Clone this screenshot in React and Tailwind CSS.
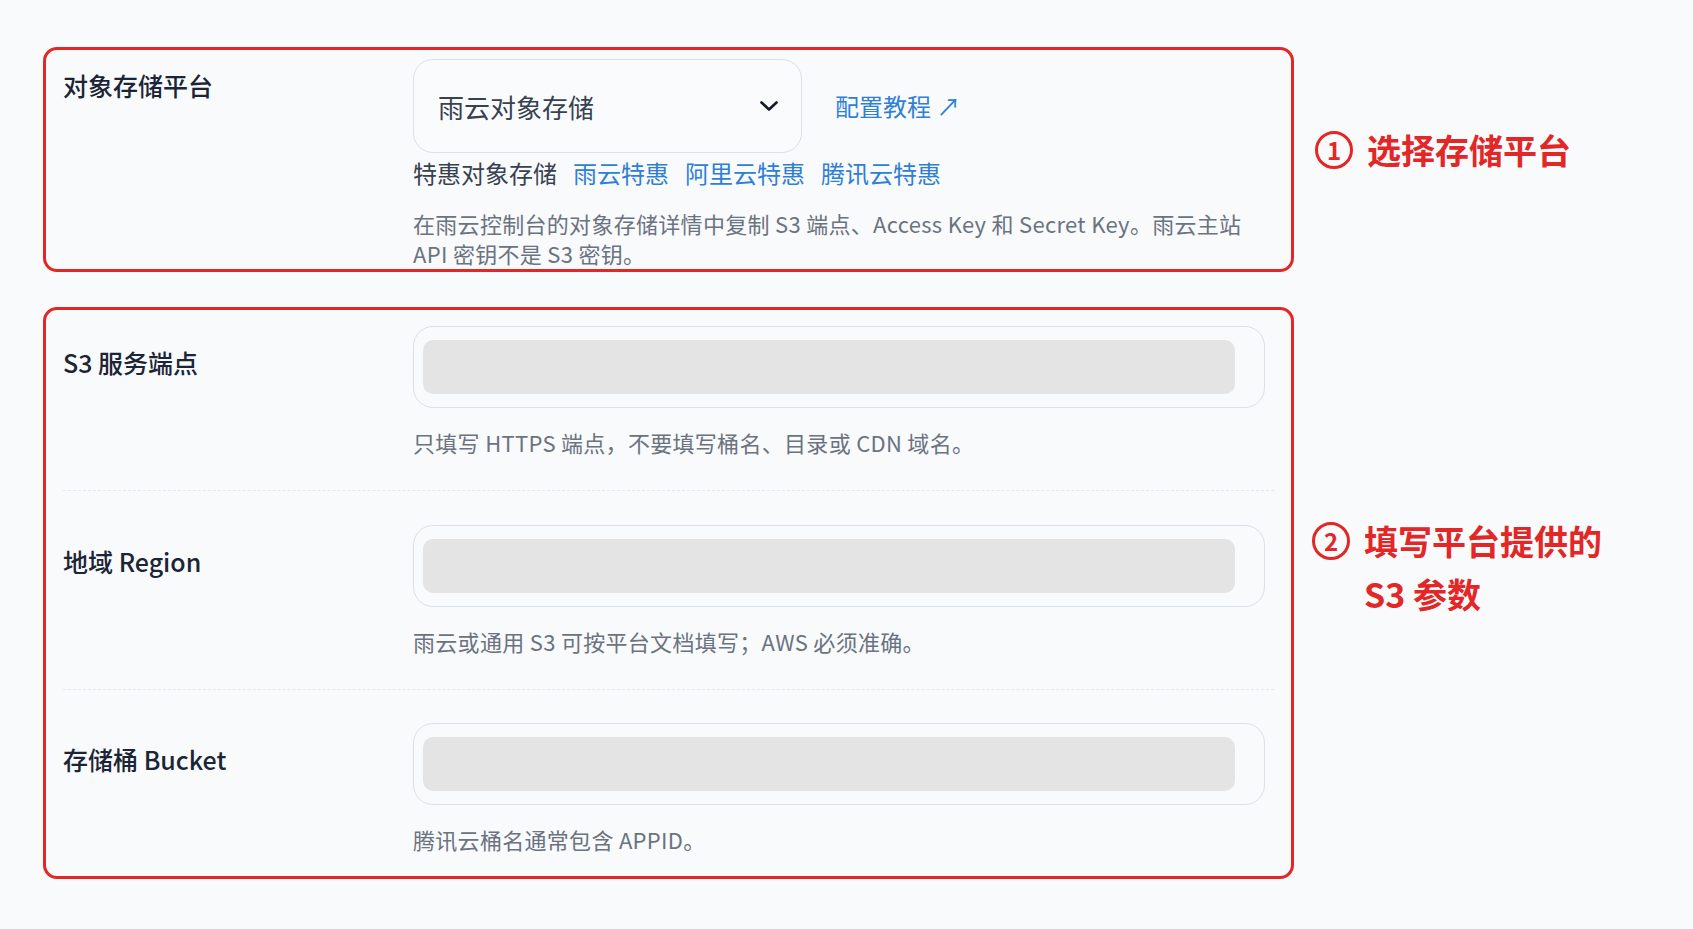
import React from "react";

const FONT = { fontFamily: '"Noto Sans CJK SC", "Noto Sans", sans-serif' };

const fields = [
  { label: "S3 服务端点", help: "只填写 HTTPS 端点，不要填写桶名、目录或 CDN 域名。" },
  { label: "地域 Region", help: "雨云或通用 S3 可按平台文档填写；AWS 必须准确。" },
  { label: "存储桶 Bucket", help: "腾讯云桶名通常包含 APPID。" },
];

const Circled = ({ n }) => (
  <span className="flex items-center justify-center w-[38px] h-[38px] rounded-full border-[3px] border-[#e32626] text-[24px] font-bold leading-none text-[#e32626]">
    {n}
  </span>
);

const FieldRow = ({ label, help, index, last }) => {
  const pad =
    index === 0 ? "pt-[16px] pb-[33px]" : last ? "pt-[33px] pb-[22px]" : "pt-[34px] pb-[33px]";
  return (
    <div
      className={`grid grid-cols-[350px_1fr] ${pad} ${
        last ? "" : "border-b border-dashed border-[#e3e8ee]"
      }`}
    >
      <div className="pt-[20px] text-[25px] leading-[32px] font-medium text-[#1b2536]">
        {label}
      </div>
      <div className="pr-[9px]">
        <div className="h-[82px] rounded-[20px] border border-[#d8e1ea] bg-[#f8fafc] pl-[9px] pr-[29px] py-[13px]">
          <div className="h-full rounded-[10px] bg-[#e4e4e4]" />
        </div>
        <p className="mt-[19px] text-[22px] leading-[30px] tracking-[0.3px] text-[#6b7280]">{help}</p>
      </div>
    </div>
  );
};

export default function App() {
  return (
    <div className="min-h-screen bg-[#f8fafb] pt-[47px] pl-[43px]" style={FONT}>
      {/* Platform selection */}
      <div className="flex items-start">
        <div className="w-[1251px] h-[225px] rounded-[14px] border-[3px] border-[#e32626] pl-[17px] pt-[9px]">
          <div className="grid grid-cols-[350px_1fr]">
            <div className="mt-[10px] text-[25px] leading-[32px] font-medium text-[#1b2536]">
              对象存储平台
            </div>
            <div>
              <div className="flex items-center">
                <div className="flex items-center justify-between w-[389px] h-[94px] rounded-[20px] border border-[#d8e1ea] bg-[#f9fbfc] pl-[24px] pr-[22px]">
                  <span className="text-[26px] text-[#374151]">雨云对象存储</span>
                  <svg width="20" height="12" viewBox="0 0 20 12" fill="none">
                    <path
                      d="M2.5 2.5 L10 9.5 L17.5 2.5"
                      stroke="#111827"
                      strokeWidth="2.6"
                      strokeLinecap="round"
                      strokeLinejoin="round"
                    />
                  </svg>
                </div>
                <a className="ml-[33px] text-[24px] text-[#2f7fd6]">配置教程 ↗</a>
              </div>
              <div className="mt-[4px] flex gap-[16px] text-[24px] leading-[32px]">
                <span className="text-[#374151]">特惠对象存储</span>
                <a className="text-[#2f7fd6]">雨云特惠</a>
                <a className="text-[#2f7fd6]">阿里云特惠</a>
                <a className="text-[#2f7fd6]">腾讯云特惠</a>
              </div>
              <p className="mt-[19px] w-[845px] text-[22px] leading-[30px] tracking-[0.3px] text-[#6b7280]">
                在雨云控制台的对象存储详情中复制 S3 端点、Access Key 和 Secret Key。雨云主站 API 密钥不是 S3 密钥。
              </p>
            </div>
          </div>
        </div>
        <div className="ml-[21px] mt-[81px] flex items-center gap-[14px] text-[34px] leading-[44px] font-bold text-[#e32626]">
          <Circled n="1" />
          <span>选择存储平台</span>
        </div>
      </div>

      {/* S3 parameters */}
      <div className="mt-[35px] flex items-start">
        <div className="w-[1251px] rounded-[14px] border-[3px] border-[#e32626] px-[17px]">
          {fields.map((f, i) => (
            <FieldRow key={f.label} {...f} index={i} last={i === fields.length - 1} />
          ))}
        </div>
        <div className="ml-[18px] mt-[207px] flex items-start gap-[14px] text-[34px] leading-[53px] font-bold text-[#e32626]">
          <div className="h-[53px] flex items-center">
            <Circled n="2" />
          </div>
          <div>
            <div>填写平台提供的</div>
            <div>S3 参数</div>
          </div>
        </div>
      </div>
    </div>
  );
}
